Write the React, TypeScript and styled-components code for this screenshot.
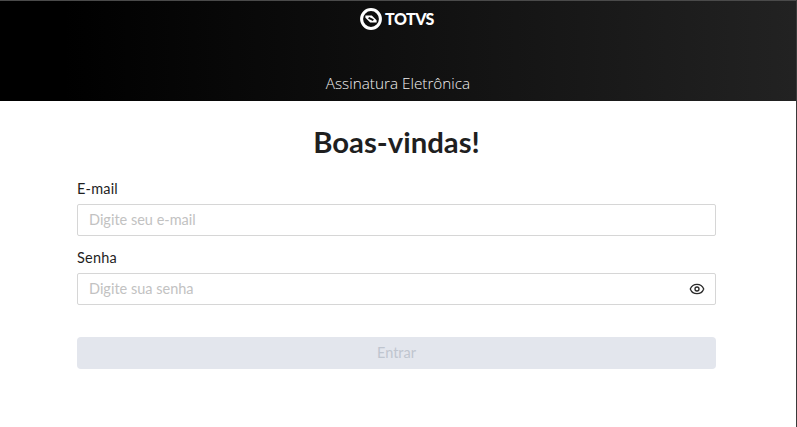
import styled, { createGlobalStyle } from 'styled-components';
import { Eye } from 'lucide-react';

const GlobalStyle = createGlobalStyle`
  html, body {
    margin: 0;
    padding: 0;
    background: #fff;
    font-family: 'Lato', 'Liberation Sans', sans-serif;
  }
  * {
    box-sizing: border-box;
  }
`;

const App = () => {
  return (
    <Page>
      <GlobalStyle />
      <Header>
        <Logo>
          <svg width="22" height="22" viewBox="0 0 22 22">
            <circle cx="11" cy="11" r="9.4" fill="none" stroke="#fff" strokeWidth="3" />
            <path d="M5.4 7.4 L11.8 7.4 L16.6 12.2 L16.6 14.6 L10.2 14.6 L5.4 9.8 Z" fill="#fff" />
            <path d="M8.6 9.8 L13.4 12.2" stroke="#111" strokeWidth="2" />
          </svg>
          <LogoText>TOTVS</LogoText>
        </Logo>
        <Subtitle>Assinatura Eletrônica</Subtitle>
      </Header>

      <Main>
        <Title>Boas-vindas!</Title>
        <Form>
          <Field>
            <Label>E-mail</Label>
            <InputBox>
              <Input type="text" placeholder="Digite seu e-mail" />
            </InputBox>
          </Field>
          <Field>
            <Label>Senha</Label>
            <InputBox>
              <Input type="password" placeholder="Digite sua senha" />
              <EyeButton>
                <Eye size={16} strokeWidth={2} />
              </EyeButton>
            </InputBox>
          </Field>
          <SubmitButton disabled>Entrar</SubmitButton>
        </Form>
      </Main>
    </Page>
  );
};

const Page = styled.div`
  width: 797px;
  height: 427px;
  overflow: hidden;
  border-right: 1px solid #3a3a3a;
  background: #fff;
`;

const Header = styled.header`
  height: 101px;
  border-top: 1px solid #4a4a4a;
  background: linear-gradient(90deg, #000 0%, #000 8%, #222 100%);
  display: flex;
  flex-direction: column;
  align-items: center;
  padding-top: 7px;
`;

const Logo = styled.div`
  display: flex;
  align-items: center;
  gap: 3px;
  height: 22px;
  margin-right: 2px;
`;

const LogoText = styled.span`
  margin-top: -2px;
  color: #fff;
  font-family: 'Lato', sans-serif;
  font-size: 16px;
  font-weight: 900;
  letter-spacing: -0.5px;
`;

const Subtitle = styled.div`
  margin-top: 43px;
  color: #f0f0f0;
  font-family: 'Open Sans', sans-serif;
  font-size: 15.3px;
  font-weight: 300;
  line-height: 20px;
`;

const Main = styled.main`
  padding: 0 80px 0 77px;
`;

const Title = styled.h1`
  margin: 23px 0 0;
  text-align: center;
  color: #1f1f1f;
  font-size: 29.3px;
  font-weight: 700;
  line-height: 36px;
`;

const Form = styled.form`
  margin-top: 20px;
  display: flex;
  flex-direction: column;
  gap: 13px;
`;

const Field = styled.div`
  display: flex;
  flex-direction: column;
  gap: 6px;
`;

const Label = styled.label`
  color: #1f1f1f;
  font-size: 14.5px;
  letter-spacing: 0.2px;
  line-height: 18px;
`;

const InputBox = styled.div`
  height: 32px;
  display: flex;
  align-items: center;
  padding: 0 11px 2px;
  border: 1px solid #d6d6d6;
  border-radius: 2px;
`;

const Input = styled.input`
  flex: 1;
  min-width: 0;
  border: 0;
  outline: 0;
  padding: 0;
  font-family: inherit;
  font-size: 14.5px;
  color: #1f1f1f;

  &::placeholder {
    color: #c2c2c2;
    opacity: 1;
  }
`;

const EyeButton = styled.span`
  display: flex;
  margin: 2px -1px 0 0;
  color: #2a2a2a;
`;

const SubmitButton = styled.button`
  margin-top: 19px;
  height: 32px;
  padding: 0 0 2px;
  border: 0;
  border-radius: 4px;
  background: #e3e6ed;
  color: #bfc5cf;
  font-family: inherit;
  font-size: 14.5px;
`;

export default App;
